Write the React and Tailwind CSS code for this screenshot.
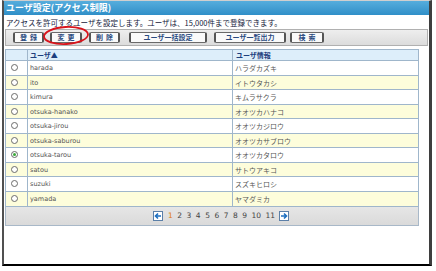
import React from "react";

const rows = [
  ["harada", "ハラダカズキ"],
  ["ito", "イトウタカシ"],
  ["kimura", "キムラサクラ"],
  ["otsuka-hanako", "オオツカハナコ"],
  ["otsuka-jirou", "オオツカジロウ"],
  ["otsuka-saburou", "オオツカサブロウ"],
  ["otsuka-tarou", "オオツカタロウ"],
  ["satou", "サトウアキコ"],
  ["suzuki", "スズキヒロシ"],
  ["yamada", "ヤマダミカ"],
];

const jp = { fontFamily: '"Noto Sans CJK JP", "DejaVu Sans", sans-serif' };

function Btn({ children, w }) {
  return (
    <div
      className={`h-[11px] ${w} flex items-center justify-center bg-[#fafafa] border border-[#6a6a6a] border-x-2 border-x-[#555] rounded-[2px] text-[7px] font-bold text-[#2a4a80] leading-none`}
      style={jp}
    >
      {children}
    </div>
  );
}

function Arrow({ dir }) {
  return (
    <div className="w-[10px] h-[10px] bg-white border border-[#5b7fa8] flex items-center justify-center">
      <svg width="8" height="8" viewBox="0 0 8 8">
        {dir === "left" ? (
          <path d="M7 4H2M4 1.5L1.5 4L4 6.5" stroke="#1e6fc0" strokeWidth="1.6" fill="none" />
        ) : (
          <path d="M1 4H6M4 1.5L6.5 4L4 6.5" stroke="#1e6fc0" strokeWidth="1.6" fill="none" />
        )}
      </svg>
    </div>
  );
}

export default function App() {
  return (
    <div className="w-[436px] h-[271px] bg-white relative overflow-hidden">
      <div className="ml-[2px] w-[430px] h-[266px] border-l-2 border-l-[#505050] border-r-[3px] border-r-[#3e3e3e] border-b-2 border-b-black border-t border-t-[#cfcfcf] flex flex-col">
        <div
          className="h-[14px] bg-gradient-to-b from-[#55addd] to-[#2f8fc8] text-white font-bold text-[9px] leading-[14px] pl-[2px]"
          style={jp}
        >
          ユーザ設定(アクセス制限)
        </div>
        <div className="h-[13px] mt-[1px] text-[7.5px] leading-[13px] text-[#14203a] pl-[2px]" style={jp}>
          アクセスを許可するユーザを設定します。ユーザは、15,000件まで登録できます。
        </div>
        <div className="mt-[0px] mx-[1px] h-[17px] bg-gradient-to-b from-[#eeeeee] to-[#dcdcdc] border border-[#b0b0b0] flex items-center pl-[7px]">
          <Btn w="w-[31px]">登&nbsp;&nbsp;録</Btn>
          <div className="w-[6px]" />
          <Btn w="w-[32px]">変&nbsp;&nbsp;更</Btn>
          <div className="w-[7px]" />
          <Btn w="w-[31px]">削&nbsp;&nbsp;除</Btn>
          <div className="w-[9px]" />
          <Btn w="w-[78px]">ユーザ一括設定</Btn>
          <div className="w-[7px]" />
          <Btn w="w-[72px]">ユーザ一覧出力</Btn>
          <div className="w-[4px]" />
          <Btn w="w-[34px]">検&nbsp;&nbsp;索</Btn>
        </div>
        <div className="mt-[3px] ml-[1px] w-[414px] border border-[#9fb6cb]">
          <div className="flex h-[11px] bg-[#ddeefa] border-b border-[#9fb6cb] text-[7px] font-bold text-[#1d3f7e] leading-[11px]" style={jp}>
            <div className="w-[22px] border-r border-[#9fb6cb]" />
            <div className="w-[205px] border-r border-[#9fb6cb] pl-[2px]">ユーザ▲</div>
            <div className="flex-1 pl-[3px]">ユーザ情報</div>
          </div>
          {rows.map(([u, k], i) => (
            <div
              key={u}
              className={`flex h-[14.5px] border-b border-[#9fb6cb] last:border-b-0 text-[6.5px] text-[#555] leading-[14px] ${i % 2 === 1 ? "bg-[#fdfddb]" : "bg-white"}`}
            >
              <div className="w-[22px] border-r border-[#9fb6cb] flex items-center pl-[5px]">
                <div className="w-[7px] h-[7px] rounded-full border border-[#6b6b6b] bg-white flex items-center justify-center">
                  {u === "otsuka-tarou" && <div className="w-[3px] h-[3px] rounded-full bg-[#3aa83a]" />}
                </div>
              </div>
              <div className="w-[205px] border-r border-[#9fb6cb] pl-[2px]" style={{ fontFamily: '"DejaVu Sans", sans-serif' }}>
                {u}
              </div>
              <div className="flex-1 pl-[2px] text-[7px]" style={jp}>
                {k}
              </div>
            </div>
          ))}
        </div>
        <div className="ml-[1px] w-[414px] h-[19px] bg-gradient-to-b from-[#e6e6e6] to-[#dadada] border border-[#a8b8c8] border-t-0 flex items-center pl-[147px] text-[7.5px] text-[#444]" style={{ fontFamily: '"DejaVu Sans", sans-serif' }}>
          <Arrow dir="left" />
          <div className="flex gap-[4.5px] ml-[5px] mr-[4px]">
            <span className="text-[#e07a10]">1</span>
            <span>2</span>
            <span>3</span>
            <span>4</span>
            <span>5</span>
            <span>6</span>
            <span>7</span>
            <span>8</span>
            <span>9</span>
            <span>10</span>
            <span>11</span>
          </div>
          <Arrow dir="right" />
        </div>
      </div>
      <svg className="absolute left-[42px] top-[25px]" width="48" height="21" viewBox="0 0 48 21">
        <ellipse cx="24" cy="10.5" rx="22" ry="8.5" transform="rotate(-3 24 10.5)" fill="none" stroke="#d8141c" strokeWidth="1.8" />
      </svg>
    </div>
  );
}
